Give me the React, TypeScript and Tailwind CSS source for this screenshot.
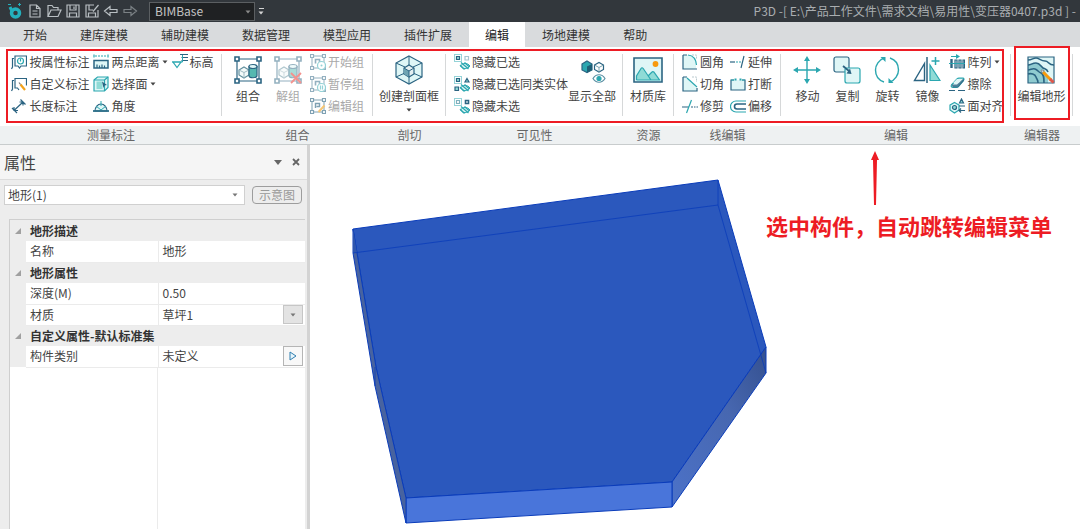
import React, { useState } from "react";
import clsx from "clsx";

const NAVY = "#2b6482";
const TEAL = "#2ba7b0";
const PALE = "#dff6f6";
const MINT = "#8fdbd6";

const Svg = ({ w = 16, h = 16, children, className }: { w?: number; h?: number; children: React.ReactNode; className?: string }) => (
  <svg aria-hidden="true" width={w} height={h} viewBox={`0 0 ${w} ${h}`} fill="none" stroke={NAVY} strokeWidth="1.2" className={clsx("shrink-0", className)}>
    {children}
  </svg>
);

const Caret = ({ className }: { className?: string }) => (
  <svg aria-hidden="true" width="6" height="4" viewBox="0 0 6 4" className={clsx("shrink-0", className)}>
    <path d="M0.5 0.5h5L3 3.5z" fill="currentColor" />
  </svg>
);

/* small icons */
const AttrMark = () => (
  <Svg>
    <path d="M4 2h11.5v10H10l-1.5 2L7 12H4zM3 4.5H1.5V13L.5 15" />
    <circle cx="9.5" cy="7" r="3" stroke={TEAL} />
    <path d="M9.5 4.5v3" stroke={TEAL} />
  </Svg>
);
const CustomMark = () => (
  <Svg>
    <path d="M8 14l-1.5-2H4V2.5h11.500v7M3 4.5H1.5V13L.5 15" />
    <path d="M9.5 8.5l4.500 5.500" stroke="#f3a31b" strokeWidth="2.2" />
    <path d="M8 6.5l1.500 2" stroke="#777" />
  </Svg>
);
const LengthMark = () => (
  <Svg>
    <path d="M3 12.5L12 4M1 10l5 5M9.5 1.500l5 5M3 9v3.500h4M8.5 4H12v3.500" />
  </Svg>
);
const Distance = () => (
  <Svg>
    <path d="M2 2h12" stroke={TEAL} strokeDasharray="2 1" />
    <path d="M1 .5v3M15 .5v3" stroke={TEAL} />
    <path d="M1 6.500h14V14H1z" fill={PALE} strokeWidth="1.5" />
    <path d="M4 10.500V14M6.500 11.500V14M9 10.500V14M11.500 11.500V14" />
  </Svg>
);
const SelectFace = () => (
  <Svg>
    <path d="M1 4L4.500 1H15v10.500L11.500 15H1z" fill={PALE} stroke={TEAL} />
    <path d="M3.500 5.500h6V13h-6z" fill={MINT} stroke="none" />
    <path d="M1 4h10.500v11M11.500 4L15 1" stroke={TEAL} />
    <path d="M9 5.500l5 3.500-2.500.5-1 2.500z" fill={NAVY} stroke="none" />
  </Svg>
);
const Angle = () => (
  <Svg>
    <path d="M2 13a6 7 0 0 1 12 0z" fill={PALE} />
    <path d="M8 3v5M0 13h16M3 8l5 4 5-4" stroke={TEAL} strokeWidth="1" />
    <path d="M0 13h16" strokeWidth="1.5" />
  </Svg>
);
const Elevation = () => (
  <Svg>
    <path d="M8 .5h8M9.500 3.500H16M9.500 6.500H16" />
    <path d="M1 8h8l-4 5.500z" stroke={TEAL} />
    <path d="M0 8h10.500V1" stroke={TEAL} strokeWidth="1" />
  </Svg>
);

const frame = (
  <>
    <path d="M2 2h12v12H2z" stroke={NAVY} strokeWidth="1" />
    <path d="M.5.5h3v3h-3zM12.500.5h3v3h-3zM.5 12.500h3v3h-3zM12.500 12.500h3v3h-3z" fill="#fff" />
  </>
);
const GroupStart = () => (
  <Svg className="opacity-50">
    {frame}
    <path d="M5.500 9.500v-4h4v3" strokeWidth="1.6" />
    <circle cx="11.500" cy="11.500" r="4" fill="#fff" stroke={TEAL} />
    <circle cx="11.500" cy="11.500" r="1" fill={TEAL} stroke="none" />
  </Svg>
);
const GroupPause = () => (
  <Svg className="opacity-50">
    {frame}
    <path d="M5.500 9.500v-4h4v3" strokeWidth="1.6" />
    <circle cx="11.500" cy="11.500" r="4" fill="#fff" stroke={TEAL} />
    <path d="M10.500 9.500v4M12.500 9.500v4" stroke={TEAL} />
  </Svg>
);
const GroupEdit = () => (
  <Svg className="opacity-60">
    {frame}
    <path d="M5.500 10V5.500h4v3h-3" strokeWidth="1.4" />
    <path d="M14.500 7.500L8.500 14" stroke="#f3a31b" strokeWidth="2" />
  </Svg>
);

const EyeOff = () => (
  <>
    <path d="M6.500 12c2-3.5 7-3.5 9.500 0-2.5 3.500-7.500 3.500-9.500 0z" fill={PALE} stroke={TEAL} strokeWidth="1" />
    <path d="M7 8.500l7.500 6.500M10.500 8.500l5 4.500M6 11l4.500 4.500" stroke={TEAL} strokeWidth="1.3" />
  </>
);
const HideSelected = () => (
  <Svg>
    <path d="M.5.5h7v7h-7z" stroke={TEAL} strokeDasharray="1 1" strokeWidth="1" />
    <path d="M2.500 2.500h3v3h-3z" fill={MINT} />
    <path d="M11 2.500h3.500V6H11z" stroke="#a8c4cf" />
    <EyeOff />
  </Svg>
);
const HideSame = () => (
  <Svg>
    <path d="M.5.5h7v7h-7z" stroke={TEAL} strokeDasharray="1 1" strokeWidth="1" />
    <path d="M2.500 2.500h3v3h-3zM1 11h3.500v3.500H1zM13 2.500l2 3.500h-4z" fill={MINT} />
    <EyeOff />
  </Svg>
);
const HideUnselected = () => (
  <Svg>
    <path d="M.5.5h7v7h-7z" stroke={TEAL} strokeDasharray="1 1" strokeWidth="1" />
    <path d="M2.500 2.500h3v3h-3z" stroke="#7fb0bd" />
    <path d="M11.500 2.500h3v3h-3z" strokeWidth="1.6" />
    <EyeOff />
  </Svg>
);

const Fillet = () => (
  <Svg>
    <path d="M1 1h5c5 0 8 4 8 8v6H1z" fill={PALE} stroke="none" />
    <path d="M1 1v14h14M1 1h4" />
    <path d="M6 1c5 .5 8 4 8.500 10" stroke={TEAL} />
    <path d="M10 1h4.500v4" stroke="#b9c9ce" strokeDasharray="2 1" strokeWidth="1" />
  </Svg>
);
const Chamfer = () => (
  <Svg>
    <path d="M1 1h4l9 10v4H1z" fill={PALE} stroke="none" />
    <path d="M1 1v14h14v-3M1 1h4" />
    <path d="M5 2l10 9" stroke={TEAL} />
    <path d="M10 1h4.500v5" stroke="#b9c9ce" strokeDasharray="2 1" strokeWidth="1" />
  </Svg>
);
const Trim = () => (
  <Svg>
    <path d="M0 9h7M9 9h2M12 9h1.500M14.500 9H16" />
    <path d="M9.500 2L4.500 15" stroke={TEAL} />
  </Svg>
);
const Extend = () => (
  <Svg>
    <path d="M0 8h5" />
    <path d="M6 8h2M9 8h2" stroke={TEAL} />
    <path d="M14 2l-3 12" />
  </Svg>
);
const Break = () => (
  <Svg>
    <path d="M4 4H1v10h14V4h-3" fill={PALE} />
    <path d="M1 4h3M12 4h3" stroke={TEAL} />
    <path d="M4.500 2.500h2v2h-2zM9.500 2.500h2v2h-2z" fill={TEAL} stroke="none" />
  </Svg>
);
const Offset = () => (
  <Svg>
    <path d="M16 3H6a5 5 0 0 0 0 11h10" stroke={TEAL} />
    <path d="M16 6H7a2.500 2.500 0 0 0 0 5h9" strokeWidth="1.6" />
  </Svg>
);
const ArrayIcon = () => (
  <Svg>
    <path d="M2.500 5v9" strokeWidth="2.4" />
    <path d="M6 6h2v8H6zM10 6h2v8h-2zM14 6h1.500v8H14z" fill={PALE} />
    <path d="M0 9.500h16M2 2.500h6" stroke={TEAL} />
    <path d="M7 0l4 2.500L7 5z" fill={TEAL} stroke="none" />
  </Svg>
);
const Erase = () => (
  <Svg>
    <path d="M2.500 9L8 3c.5-.5 1-.8 2-.8h4c1 0 1.300 1 .6 1.900L9.600 10.500c-.4.5-1 .8-1.600.8H4C2.500 11.300 1.700 10.100 2.500 9z" fill={PALE} stroke={TEAL} />
    <path d="M2.500 8.500H8l6.500-6 .5 2.500-6 6.500H4z" fill={NAVY} stroke="none" opacity=".8" />
    <path d="M4 7l4-4h5L9.500 7z" fill={PALE} stroke="none" />
    <path d="M0 14.500h6M9 14.500h7" />
  </Svg>
);
const FaceAlign = () => (
  <Svg>
    <path d="M1 7l4.500-2.500L10 7v5l-4.500 3L1 12z" fill={PALE} stroke={TEAL} />
    <circle cx="5.500" cy="9.500" r="2" fill={MINT} />
    <path d="M12.500 1l2 4h-4z" fill={MINT} />
    <path d="M10 8h6M10 12.500h6M12 10.500l-2 2 2 2" />
  </Svg>
);

/* large icons */
const bigFrame = (
  <>
    <path d="M3 3h22v22H3z" />
    <path d="M1 1h4v4H1zM23 1h4v4h-4zM1 23h4v4H1zM23 23h4v4h-4z" fill="#fff" strokeWidth="1.6" />
  </>
);
const shapes = (
  <>
    <path d="M5 14l5-3 5 3v5l-5 3-5-3z" fill="#f4fafa" stroke="#63919f" />
    <path d="M5 14l5 2.500 5-2.500M10 16.500V22" stroke="#9fb9c1" strokeWidth="1" />
    <path d="M15 10.500v9c0 3 8 3 8 0v-9z" fill="#55b8b0" />
    <ellipse cx="19" cy="10.500" rx="4" ry="2" fill={PALE} />
  </>
);
const GroupBig = () => (
  <Svg w={28} h={28}>
    {bigFrame}
    {shapes}
  </Svg>
);
const Ungroup = () => (
  <Svg w={28} h={28}>
    <g opacity=".5">
      {bigFrame}
      {shapes}
    </g>
    <path d="M17 17l10 10M27 17L17 27" stroke="#f3928e" strokeWidth="1.8" />
  </Svg>
);
const SectionBox = () => (
  <Svg w={30} h={30}>
    <path d="M15 1l13 7v14l-13 7-13-7V8z" fill={PALE} />
    <path d="M2 8l9 4M28 8l-9 4M15 1v9M2 22l9-4M28 22l-9-4M15 29v-8" strokeWidth="1" />
    <path d="M10 13l5-3 5 3v6l-5 3-5-3z" fill="#e4eff1" />
    <path d="M10 13l5 3v6l-5-3z" fill="#6fa4b3" stroke="none" />
    <path d="M10 13l5 3 5-3M15 16v6" strokeWidth="1" />
  </Svg>
);
const ShowAll = () => (
  <Svg w={28} h={28}>
    <path d="M4 8l5-3 5 3v6l-5 2.500L4 14z" fill={TEAL} />
    <path d="M9 10.500L14 8v6l-5 2.500z" fill="#1f5f76" stroke="none" />
    <path d="M16.500 9L21 6.500 25.500 9v4.500L21 16l-4.500-2.500z" fill="#fff" />
    <path d="M16.500 9l4.500 2.500L25.500 9M21 11.500V16" strokeWidth="1" stroke="#7aa3b0" />
    <path d="M15 22.500c3-5 9-5 12 0-3 5-9 5-12 0z" fill="#fff" stroke="#5a8fa3" />
    <circle cx="21" cy="22.500" r="2" fill={TEAL} stroke={TEAL} />
  </Svg>
);
const Material = () => (
  <Svg w={30} h={28}>
    <path d="M1 2h28v24H1z" fill={PALE} strokeWidth="1.6" />
    <path d="M3.500 24v-4L8 12.500c.6-1 1.500-1 2.200 0L18 24M15 20l4-4c.5-.6 1.200-.6 1.800 0l5.700 8h-23" fill={MINT} stroke={TEAL} />
    <circle cx="22.500" cy="8" r="2.900" fill="#f79a0c" stroke="none" />
  </Svg>
);
const Move = () => (
  <Svg w={28} h={28}>
    <path d="M14 4v20M4 14h20" stroke={TEAL} strokeWidth="1.4" />
    <path d="M14 0l3 5h-6zM14 28l-3-5h6zM0 14l5-3v6zM28 14l-5 3v-6z" fill={TEAL} stroke="none" />
  </Svg>
);
const Copy = () => (
  <Svg w={28} h={28}>
    <rect x="1" y="1" width="15" height="15" rx="2" fill={PALE} />
    <rect x="12" y="12" width="15" height="15" rx="2" fill={PALE} stroke={TEAL} />
    <path d="M10 10l6 5" strokeWidth="1.8" />
    <path d="M18.500 18l-5-.5 3.500-5z" fill={NAVY} stroke="none" />
  </Svg>
);
const Rotate = () => (
  <Svg w={28} h={28}>
    <path d="M11 26C5 24 2.500 19 2.500 14S6 4 11 2" stroke={TEAL} strokeWidth="1.4" />
    <path d="M17 2c6 2 8.500 7 8.500 12S22 24 17 26" stroke={TEAL} strokeWidth="1.4" />
    <path d="M7.500 1h5v5zM20.500 27h-5v-5z" fill={TEAL} stroke="none" />
  </Svg>
);
const Mirror = () => (
  <Svg w={28} h={28}>
    <path d="M14 1v26" strokeWidth="1.5" />
    <path d="M11.500 7.500v17H1.500z" fill="#fff" strokeWidth="1.4" />
    <path d="M17 9v15.500h10z" fill={MINT} stroke={TEAL} />
    <path d="M22.500 1v8M18.500 5h8" stroke={TEAL} strokeWidth="1.5" />
  </Svg>
);
const Terrain = () => (
  <Svg w={28} h={28}>
    <path d="M1 1h26v26H1z" fill={PALE} stroke="none" />
    <path d="M1 9c6-3 12-2 15 3s6 8 5 15H1z" fill="#8fcbd0" stroke="none" />
    <path d="M1 4c4 0 5-2 8-2s5 3 9 3 3 4 9 4M1 9c3 0 4-2 8-2s5 4 7 5 4 1 5 4M1 14c3 0 4-2 7-1s3 3 6 4 3 5 3 10M1 18c3-1 7 0 8 3s2 2 2 6" strokeWidth="1.6" />
    <path d="M1 1h26v26H1z" />
    <path d="M16 16l8 8" stroke="#f79a0c" strokeWidth="3" />
    <path d="M23 23l3.500 3.500" stroke="#e0584c" strokeWidth="3" />
    <path d="M14 14l3 .5-2 2.200z" fill="#fff" stroke="#666" strokeWidth=".6" />
  </Svg>
);

type Item = { label: string; icon: () => React.ReactElement; caret?: boolean; disabled?: boolean };

const SmallColumn = ({ items }: { items: Item[] }) => (
  <div className="flex flex-col">
    {items.map(({ label, icon: Icon, caret, disabled }) => (
      <button key={label} type="button" disabled={disabled} className="flex h-[22px] items-center gap-0.5 whitespace-nowrap text-[#444] disabled:text-[#a9a9a9]">
        <Icon />
        <span>{label}</span>
        {caret && <Caret />}
      </button>
    ))}
  </div>
);

const BigButton = ({ label, icon: Icon, caret, disabled }: Item) => (
  <button type="button" disabled={disabled} className="flex min-w-10 flex-col items-center gap-1 self-start whitespace-nowrap pt-[5px] leading-4 text-[#444] disabled:text-[#a9a9a9]">
    <span className="flex h-7 items-center">
      <Icon />
    </span>
    <span>{label}</span>
    {caret && <Caret />}
  </button>
);

const Group = ({ title, className, children }: { title: string; className: string; children: React.ReactNode }) => (
  <section aria-label={title} className={clsx("flex shrink-0 flex-col", className)}>
    <div className="flex h-[79px] items-start">
      <div className="flex min-w-0 flex-1 items-start justify-center pt-1">{children}</div>
      <div className="mt-[7px] h-[62px] w-px bg-[#d6d8d9]" />
    </div>
    <div className="h-[19px] border-b border-[#c8cccd] bg-[#eef1f2] text-center leading-[18px] text-[#666]">{title}</div>
  </section>
);

const tabs = ["开始", "建库建模", "辅助建模", "数据管理", "模型应用", "插件扩展", "编辑", "场地建模", "帮助"];

const TitleBar = () => (
  <header className="flex h-[22px] items-center bg-[#32373c] pl-[7px] pr-1 text-[#a9adb0]">
    <svg aria-hidden="true" width="16" height="18" viewBox="0 0 16 18" fill="none">
      <circle cx="8.500" cy="11" r="4" stroke="#24b0bd" strokeWidth="3.500" />
      <path d="M3 5l2.500 5" stroke="#24b0bd" strokeWidth="3" />
      <path d="M1 2.500h3M12.500 1v3M11 2.500h3" stroke="#24b0bd" />
    </svg>
    <div className="ml-1 flex items-center gap-[3px]">
      <button type="button" aria-label="新建">
        <Svg>
          <path d="M3 2h6.500L13 5.500V14H3zM9.500 2v3.500H13M5.500 8h5M5.500 11h5" stroke="#b9bfc3" />
        </Svg>
      </button>
      <button type="button" aria-label="打开">
        <Svg>
          <path d="M2 13.500v-11h4l1.500 2H12V7M2 13.500L5 7h10l-3 6.500z" stroke="#b9bfc3" />
        </Svg>
      </button>
      <button type="button" aria-label="保存">
        <Svg>
          <path d="M2 2h12v12H2zM5 2v5h6V2M4.500 14v-4h7v4M9 3.500V6" stroke="#b9bfc3" />
        </Svg>
      </button>
      <button type="button" aria-label="另存为">
        <Svg>
          <path d="M10 2H2v12h12V7M5 2v5h4M4.500 14v-4h7v4M14.500 2L9 8.500" stroke="#b9bfc3" />
        </Svg>
      </button>
      <button type="button" aria-label="撤销">
        <Svg>
          <path d="M1.500 8L7 3.500v3h7v3H7v3z" stroke="#b9bfc3" />
        </Svg>
      </button>
      <button type="button" aria-label="重做">
        <Svg>
          <path d="M14.500 8L9 3.500v3H2v3h7v3z" stroke="#7b8185" />
        </Svg>
      </button>
    </div>
    <div className="relative ml-[11px]">
      <select aria-label="模块" className="block h-[19px] w-[106px] appearance-none border border-[#5b5f62] bg-[#1f2123] px-[5px] text-xs leading-4 text-[#c4c4c4]">
        <option>BIMBase</option>
      </select>
      <Caret className="pointer-events-none absolute right-1 top-2 text-[#8a8a8a]" />
    </div>
    <button type="button" aria-label="自定义快速访问工具栏" className="ml-[3px] flex flex-col items-center gap-0.5 text-[#d5d5d5]">
      <span className="h-px w-[5px] bg-[#d5d5d5]" />
      <Caret />
    </button>
    <h1 className="ml-auto whitespace-pre text-xs leading-[18px]">P3D -[ E:\产品工作文件\需求文档\易用性\变压器0407.p3d ] -</h1>
  </header>
);

const Ribbon = () => (
  <div className="flex bg-white">
    {/* groups shown when a component is selected */}
    <div className="relative flex">
      <Group title="测量标注" className="w-[222px]">
        <div className="flex gap-1 pl-1">
          <SmallColumn
            items={[
              { label: "按属性标注", icon: AttrMark },
              { label: "自定义标注", icon: CustomMark },
              { label: "长度标注", icon: LengthMark },
            ]}
          />
          <SmallColumn
            items={[
              { label: "两点距离", icon: Distance, caret: true },
              { label: "选择面", icon: SelectFace, caret: true },
              { label: "角度", icon: Angle },
            ]}
          />
          <SmallColumn items={[{ label: "标高", icon: Elevation }]} />
        </div>
      </Group>
      <Group title="组合" className="w-[151px]">
        <BigButton label="组合" icon={GroupBig} />
        <BigButton label="解组" icon={Ungroup} disabled />
        <div className="pl-0.5 pr-0.5">
          <SmallColumn
            items={[
              { label: "开始组", icon: GroupStart, disabled: true },
              { label: "暂停组", icon: GroupPause, disabled: true },
              { label: "编辑组", icon: GroupEdit, disabled: true },
            ]}
          />
        </div>
      </Group>
      <Group title="剖切" className="w-[73px]">
        <BigButton label="创建剖面框" icon={SectionBox} caret />
      </Group>
      <Group title="可见性" className="w-[177px]">
        <div className="pl-0.5">
          <SmallColumn
            items={[
              { label: "隐藏已选", icon: HideSelected },
              { label: "隐藏已选同类实体", icon: HideSame },
              { label: "隐藏未选", icon: HideUnselected },
            ]}
          />
        </div>
        <BigButton label="显示全部" icon={ShowAll} />
      </Group>
      <Group title="资源" className="w-[51px]">
        <BigButton label="材质库" icon={Material} />
      </Group>
      <Group title="线编辑" className="w-[107px]">
        <div className="flex gap-1.5">
          <SmallColumn
            items={[
              { label: "圆角", icon: Fillet },
              { label: "切角", icon: Chamfer },
              { label: "修剪", icon: Trim },
            ]}
          />
          <SmallColumn
            items={[
              { label: "延伸", icon: Extend },
              { label: "打断", icon: Break },
              { label: "偏移", icon: Offset },
            ]}
          />
        </div>
      </Group>
      <Group title="编辑" className="w-[230px]">
        <BigButton label="移动" icon={Move} />
        <BigButton label="复制" icon={Copy} />
        <BigButton label="旋转" icon={Rotate} />
        <BigButton label="镜像" icon={Mirror} />
        <div className="pl-0.5">
          <SmallColumn
            items={[
              { label: "阵列", icon: ArrayIcon, caret: true },
              { label: "擦除", icon: Erase },
              { label: "面对齐", icon: FaceAlign },
            ]}
          />
        </div>
      </Group>
      <div className="pointer-events-none absolute bottom-[22px] left-[6px] right-[7px] top-[2px] border-2 border-[#ed1c24]" />
    </div>
    <div className="relative flex">
      <Group title="编辑器" className="w-[62px]">
        <BigButton label="编辑地形" icon={Terrain} />
      </Group>
      <div className="pointer-events-none absolute -top-px bottom-[25px] left-[3px] right-[3px] border-2 border-[#ed1c24]" />
    </div>
    <div className="mt-[79px] h-[19px] flex-1 border-b border-[#c8cccd] bg-[#eef1f2]" />
  </div>
);

const properties = [
  { title: "地形描述", rows: [{ name: "名称", value: "地形" }] },
  {
    title: "地形属性",
    rows: [
      { name: "深度(M)", value: "0.50" },
      { name: "材质", value: "草坪1", action: "list" },
    ],
  },
  { title: "自定义属性-默认标准集", rows: [{ name: "构件类别", value: "未定义", action: "open" }] },
];

const PropertyTable = () => (
  <table className="w-full table-fixed border-collapse">
    <colgroup>
      <col className="w-4" />
      <col className="w-[132px]" />
      <col />
    </colgroup>
    {properties.map((group) => (
      <tbody key={group.title}>
        <tr className="h-[21px] bg-[#ededed]">
          <td className="p-0">
            <svg aria-hidden="true" width="6" height="6" viewBox="0 0 6 6" className="mx-auto">
              <path d="M6 0v6H0z" fill="#a0a0a0" />
            </svg>
          </td>
          <th colSpan={2} scope="colgroup" className="p-0 pl-1 text-left font-bold leading-5 text-[#333]">
            {group.title}
          </th>
        </tr>
        {group.rows.map((row) => (
          <tr key={row.name} className="h-[21px]">
            <td className="bg-[#ededed] p-0" />
            <th scope="row" className="border-b border-r border-[#ebebeb] p-0 pl-1 text-left font-normal leading-5">
              {row.name}
            </th>
            <td className="border-b border-[#ebebeb] p-0 pl-1 leading-5">
              <div className="flex h-5 items-center justify-between pr-0.5">
                {row.value}
                {row.action === "list" && (
                  <button type="button" aria-label="选择材质" className="flex h-[19px] w-5 items-center justify-center border border-[#c6c6c6] bg-[#e3e3e3] text-[#777]">
                    <Caret />
                  </button>
                )}
                {row.action === "open" && (
                  <button type="button" aria-label="选择构件类别" className="flex h-5 w-5 items-center justify-center border border-[#b5b5b5] bg-[#f8f8f8]">
                    <svg aria-hidden="true" width="8" height="10" viewBox="0 0 8 10">
                      <path d="M1 1l6 4-6 4z" fill="#e6f4fb" stroke="#2f7fb0" />
                    </svg>
                  </button>
                )}
              </div>
            </td>
          </tr>
        ))}
      </tbody>
    ))}
  </table>
);

const PropertyPanel = () => (
  <aside className="flex w-[310px] shrink-0 flex-col border-r-[3px] border-[#d3d3d3] bg-[#ededed] text-[#444]">
    <div className="flex h-[35px] items-center border-b border-[#dcdcdc] bg-[#f5f5f5] pl-1 pr-[7px]">
      <h2 className="flex-1 text-base text-[#444]">属性</h2>
      <button type="button" aria-label="面板选项" className="mr-2.5 text-[#666]">
        <svg aria-hidden="true" width="8" height="5" viewBox="0 0 8 5">
          <path d="M0 0h8L4 5z" fill="currentColor" />
        </svg>
      </button>
      <button type="button" aria-label="关闭" className="text-[#666]">
        <svg aria-hidden="true" width="8" height="8" viewBox="0 0 8 8">
          <path d="M1 1l6 6M7 1L1 7" stroke="currentColor" strokeWidth="1.8" />
        </svg>
      </button>
    </div>
    <div className="flex items-center gap-[7px] pb-[14px] pl-1 pr-[5px] pt-[5px]">
      <div className="relative flex-1">
        <select aria-label="选中构件" className="block h-5 w-full appearance-none border border-[#d0d0d0] bg-white px-[3px] leading-4">
          <option>地形(1)</option>
        </select>
        <Caret className="pointer-events-none absolute right-[7px] top-2 text-[#777]" />
      </div>
      <button type="button" className="h-[18px] w-[50px] rounded-sm border border-[#9d9d9d] leading-4 text-[#999]">
        示意图
      </button>
    </div>
    <div className="ml-[9px] mr-0.5 flex flex-1 flex-col border-l border-t border-[#cfcfcf] bg-white">
      <PropertyTable />
      <div className="ml-4 w-[132px] flex-1 border-r border-[#ebebeb]" />
    </div>
  </aside>
);

const Viewport = () => (
  <main className="relative min-w-0 flex-1 overflow-hidden bg-white">
    <svg role="img" aria-label="地形模型" width="420" height="350" viewBox="350 178 420 350" className="absolute left-10 top-[33px]" stroke="#0a3cba" strokeLinejoin="round">
      <defs>
        <linearGradient id="side" x1="0" y1="1" x2="1" y2="0">
          <stop offset="0" stopColor="#4c72c8" />
          <stop offset=".6" stopColor="#4767b0" />
          <stop offset="1" stopColor="#34508f" />
        </linearGradient>
      </defs>
      <path d="M353 229L718 180l48 167-94 135-266 16-30-131z" fill="#2b58bd" />
      <path d="M766 347v26l-94 134v-25z" fill="url(#side)" />
      <path d="M406 498l266-16v25l-266 16z" fill="#4975da" />
      <path d="M353 229l23 138 30 131v25l-31-137-22-133z" fill="#48639f" />
      <path d="M353 229l4 24h-4z" fill="#2f56ad" stroke="none" />
      <path d="M353 253l365-48 48 168M718 180v25M375 367v19" fill="none" strokeWidth=".8" />
    </svg>
    <div className="absolute left-[456px] top-1.5 flex flex-col gap-1 text-[#ed1c24]">
      <svg aria-hidden="true" width="8" height="54" viewBox="0 0 8 54" className="ml-[105px]">
        <path d="M4 0l4 9H6L5 54H3L2 9H0z" fill="currentColor" />
      </svg>
      <p className="whitespace-nowrap text-[22px] font-bold leading-8">选中构件，自动跳转编辑菜单</p>
    </div>
  </main>
);

export default function App() {
  const [active, setActive] = useState("编辑");

  return (
    <div className="flex min-h-screen flex-col overflow-hidden bg-[#f0f0f0] font-['Noto_Sans_CJK_SC',sans-serif] text-xs">
      <TitleBar />
      <nav role="tablist" className="flex h-[25px] gap-px bg-[#d9dbdd] pl-[7px]">
        {tabs.map((tab) => (
          <button
            key={tab}
            type="button"
            role="tab"
            aria-selected={tab === active}
            onClick={() => setActive(tab)}
            className={clsx("shrink-0 whitespace-nowrap px-4", tab === active ? "bg-white text-[#222]" : "text-[#333]")}
          >
            {tab}
          </button>
        ))}
      </nav>
      <Ribbon />
      <div className="flex flex-1">
        <PropertyPanel />
        <Viewport />
      </div>
    </div>
  );
}
